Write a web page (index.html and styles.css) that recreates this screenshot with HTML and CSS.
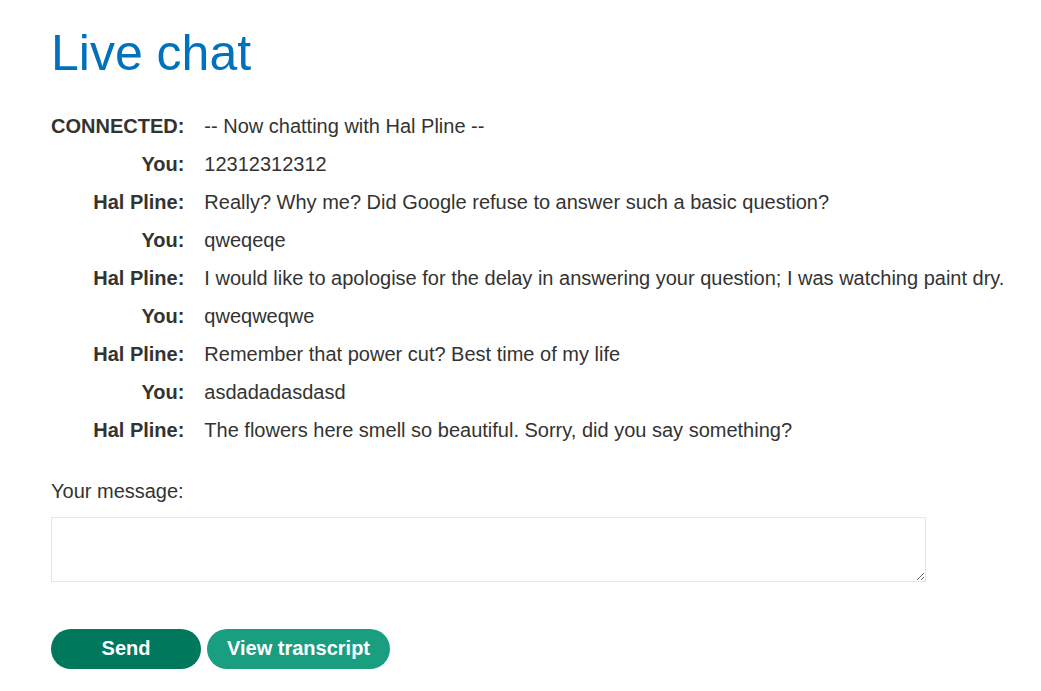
FILE: index.html
```html
<!DOCTYPE html>
<html lang="en">
<head>
<meta charset="utf-8">
<title>Live chat</title>
<link rel="stylesheet" href="styles.css">
</head>
<body>
<main class="page">
  <h1 class="title">Live chat</h1>
  <div class="chat">
    <div class="who">CONNECTED:</div><div class="msg">-- Now chatting with Hal Pline --</div>
    <div class="who">You:</div><div class="msg">12312312312</div>
    <div class="who">Hal Pline:</div><div class="msg">Really? Why me? Did Google refuse to answer such a basic question?</div>
    <div class="who">You:</div><div class="msg">qweqeqe</div>
    <div class="who">Hal Pline:</div><div class="msg">I would like to apologise for the delay in answering your question; I was watching paint dry.</div>
    <div class="who">You:</div><div class="msg">qweqweqwe</div>
    <div class="who">Hal Pline:</div><div class="msg">Remember that power cut? Best time of my life</div>
    <div class="who">You:</div><div class="msg">asdadadasdasd</div>
    <div class="who">Hal Pline:</div><div class="msg">The flowers here smell so beautiful. Sorry, did you say something?</div>
  </div>
  <form class="form">
    <label class="label" for="message">Your message:</label>
    <textarea id="message" class="input"></textarea>
    <div class="actions">
      <button type="button" class="btn btn-send">Send</button>
      <button type="button" class="btn btn-view">View transcript</button>
    </div>
  </form>
</main>
</body>
</html>
```
FILE: styles.css
```css
html, body {
  margin: 0;
  padding: 0;
  background: #ffffff;
}
body {
  font-family: "Liberation Sans", Arial, sans-serif;
  color: #333332;
  font-size: 20px;
}
.page {
  padding: 25px 0 0 51px;
}
.title {
  margin: 0 0 25px 0;
  font-size: 50px;
  font-weight: 400;
  line-height: 57px;
  color: #0071bc;
}
.chat {
  display: grid;
  grid-template-columns: max-content 1fr;
  column-gap: 20px;
  line-height: 38px;
}
.who {
  text-align: right;
  font-weight: 700;
}
.form {
  display: flex;
  flex-direction: column;
  align-items: flex-start;
  margin-top: 31px;
}
.label {
  line-height: 23px;
  margin-bottom: 14px;
}
.input {
  box-sizing: border-box;
  width: 875px;
  height: 65px;
  margin: 0;
  border: 1px solid #e6e6e6;
  font-family: inherit;
  font-size: 16px;
}
.actions {
  display: flex;
  gap: 6px;
  margin-top: 47px;
}
.btn {
  font-family: inherit;
  font-size: 20px;
  font-weight: 700;
  line-height: 23px;
  color: #ffffff;
  border: 0;
  border-radius: 20px;
  padding: 8px 20px 9px;
  height: 40px;
}
.btn-send {
  background: #00785c;
  width: 150px;
}
.btn-view {
  background: #1a9e80;
}
```
